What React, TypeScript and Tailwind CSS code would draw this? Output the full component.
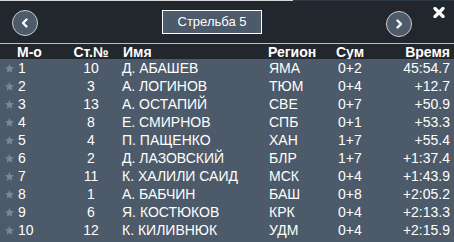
import React from "react";

type Row = {
  place: number;
  bib: number;
  name: string;
  region: string;
  sum: string;
  time: string;
};

const rows: Row[] = [
  { place: 1, bib: 10, name: "Д. АБАШЕВ", region: "ЯМА", sum: "0+2", time: "45:54.7" },
  { place: 2, bib: 3, name: "А. ЛОГИНОВ", region: "ТЮМ", sum: "0+4", time: "+12.7" },
  { place: 3, bib: 13, name: "А. ОСТАПИЙ", region: "СВЕ", sum: "0+7", time: "+50.9" },
  { place: 4, bib: 8, name: "Е. СМИРНОВ", region: "СПБ", sum: "0+1", time: "+53.3" },
  { place: 5, bib: 4, name: "П. ПАЩЕНКО", region: "ХАН", sum: "1+7", time: "+55.4" },
  { place: 6, bib: 2, name: "Д. ЛАЗОВСКИЙ", region: "БЛР", sum: "1+7", time: "+1:37.4" },
  { place: 7, bib: 11, name: "К. ХАЛИЛИ САИД", region: "МСК", sum: "0+4", time: "+1:43.9" },
  { place: 8, bib: 1, name: "А. БАБЧИН", region: "БАШ", sum: "0+8", time: "+2:05.2" },
  { place: 9, bib: 6, name: "Я. КОСТЮКОВ", region: "КРК", sum: "0+4", time: "+2:13.3" },
  { place: 10, bib: 12, name: "К. КИЛИВНЮК", region: "УДМ", sum: "0+4", time: "+2:15.9" },
];

const Star = () => (
  <svg width="11" height="11" viewBox="0 0 24 24" className="shrink-0">
    <path
      d="M12 2l2.9 6.6 7.1.6-5.4 4.7 1.6 7.1L12 17.3 5.8 21l1.6-7.1L2 9.2l7.1-.6z"
      fill="#7b8794"
    />
  </svg>
);

const RoundButton = ({ dir }: { dir: "left" | "right" }) => (
  <div className="w-[26px] h-[26px] rounded-full border border-[#c9ced4] bg-[#4d5a69] flex items-center justify-center">
    <svg width="12" height="12" viewBox="0 0 12 12">
      <path
        d={dir === "left" ? "M7.5 2.5L4 6l3.5 3.5" : "M4.5 2.5L8 6l-3.5 3.5"}
        stroke="#ffffff"
        strokeWidth="2.4"
        fill="none"
        strokeLinecap="round"
        strokeLinejoin="round"
      />
    </svg>
  </div>
);

const App: React.FC = () => {
  return (
    <div
      className="w-[454px] h-[242px] bg-[#22272e] text-white overflow-hidden flex flex-col"
      style={{ fontFamily: '"Liberation Sans", Arial, sans-serif' }}
    >
      <div className="flex h-px shrink-0">
        <div className="w-[293px] bg-[#d4d6d9]" />
        <div className="flex-1 bg-[#2b3845]" />
      </div>
      <div className="relative h-[42px] shrink-0 flex items-start">
        <div className="mt-[9px] ml-[12px]">
          <RoundButton dir="left" />
        </div>
        <div className="mt-[9px] ml-[124px] w-[100px] h-[24px] border border-white bg-[#4d5a69] flex items-center justify-center text-[13px]">
          Стрельба 5
        </div>
        <div className="mt-[10px] ml-[124px]">
          <RoundButton dir="right" />
        </div>
        <svg
          width="12"
          height="11"
          viewBox="0 0 12 11"
          className="absolute left-[433px] top-[6px]"
        >
          <path d="M2 1.5l8 8M10 1.5l-8 8" stroke="#ffffff" strokeWidth="3.2" strokeLinecap="round" />
        </svg>
      </div>
      <div className="h-px shrink-0 bg-[#b9bec4]" />
      <div className="h-[15px] shrink-0 flex items-center text-[14px] font-bold leading-none">
        <div className="w-[17px]" />
        <div className="w-[56px]">М-о</div>
        <div className="w-[36px] text-center">Ст.№</div>
        <div className="w-[159px] pl-[14px]">Имя</div>
        <div className="w-[68px]">Регион</div>
        <div className="flex-1">Сум</div>
        <div className="pr-[4px]">Время</div>
      </div>
      <div className="flex-1 bg-[#4d5a69]">
        {rows.map((r) => (
          <div key={r.place} className="h-[18px] flex items-center text-[14px] leading-none">
            <div className="w-[17px] pl-[4px] flex items-center">
              <Star />
            </div>
            <div className="w-[56px] pl-[1px]">{r.place}</div>
            <div className="w-[36px] text-center">{r.bib}</div>
            <div className="w-[159px] pl-[13px] whitespace-nowrap">{r.name}</div>
            <div className="w-[70px] pl-px">{r.region}</div>
            <div className="flex-1">{r.sum}</div>
            <div className="pr-[4px]">{r.time}</div>
          </div>
        ))}
      </div>
    </div>
  );
};

export default App;
